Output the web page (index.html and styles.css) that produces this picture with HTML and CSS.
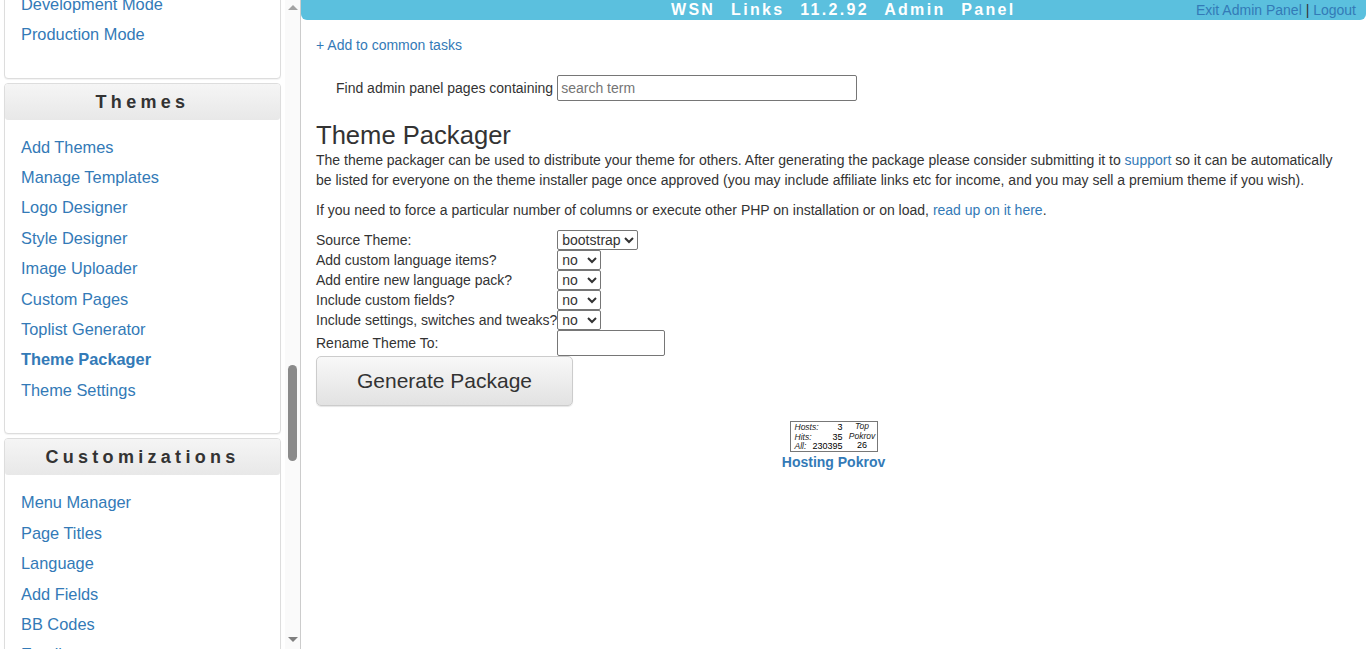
FILE: index.html
```html
<!DOCTYPE html>
<html lang="en">
<head>
  <meta charset="UTF-8" />
  <title>Theme Packager</title>
  <link rel="stylesheet" href="styles.css">
</head>
<body>
  <aside class="sidebar">
    <div class="panels">
      <div class="panel panel-first">
        <ul class="menu">
          <li><a href="#">Development Mode</a></li>
          <li><a href="#">Production Mode</a></li>
        </ul>
      </div>
      <div class="panel">
        <div class="panel-heading">Themes</div>
        <ul class="menu">
          <li><a href="#">Add Themes</a></li>
          <li><a href="#">Manage Templates</a></li>
          <li><a href="#">Logo Designer</a></li>
          <li><a href="#">Style Designer</a></li>
          <li><a href="#">Image Uploader</a></li>
          <li><a href="#">Custom Pages</a></li>
          <li><a href="#">Toplist Generator</a></li>
          <li><a href="#" class="current">Theme Packager</a></li>
          <li><a href="#">Theme Settings</a></li>
        </ul>
      </div>
      <div class="panel">
        <div class="panel-heading">Customizations</div>
        <ul class="menu">
          <li><a href="#">Menu Manager</a></li>
          <li><a href="#">Page Titles</a></li>
          <li><a href="#">Language</a></li>
          <li><a href="#">Add Fields</a></li>
          <li><a href="#">BB Codes</a></li>
          <li><a href="#">Emails</a></li>
        </ul>
      </div>
    </div>
    <div class="scrollbar">
      <span class="arrow arrow-up"></span>
      <span class="thumb"></span>
      <span class="arrow arrow-down"></span>
    </div>
  </aside>

  <main class="content">
    <header class="topbar">
      <div class="topbar-title">WSN&nbsp; Links&nbsp; 11.2.92&nbsp; Admin&nbsp; Panel</div>
      <div class="topbar-links"><a href="#">Exit Admin Panel</a> | <a href="#">Logout</a></div>
    </header>

    <div class="page">
      <a href="#" class="add-task">+ Add to common tasks</a>

      <form class="search">
        <label for="term">Find admin panel pages containing</label>
        <input type="text" id="term" class="search-input" placeholder="search term">
      </form>

      <h1>Theme Packager</h1>
      <p>The theme packager can be used to distribute your theme for others. After generating the package please consider submitting it to <a href="#">support</a> so it can be automatically be listed for everyone on the theme installer page once approved (you may include affiliate links etc for income, and you may sell a premium theme if you wish).</p>
      <p>If you need to force a particular number of columns or execute other PHP on installation or on load, <a href="#">read up on it here</a>.</p>

      <form class="packager">
        <label>Source Theme:</label>
        <div><select><option>bootstrap</option></select></div>
        <label>Add custom language items?</label>
        <div><select class="yesno"><option>no</option><option>yes</option></select></div>
        <label>Add entire new language pack?</label>
        <div><select class="yesno"><option>no</option><option>yes</option></select></div>
        <label>Include custom fields?</label>
        <div><select class="yesno"><option>no</option><option>yes</option></select></div>
        <label>Include settings, switches and tweaks?</label>
        <div><select class="yesno"><option>no</option><option>yes</option></select></div>
        <label>Rename Theme To:</label>
        <div><input type="text" class="rename"></div>
      </form>
      <button type="button" class="generate">Generate Package</button>

      <div class="hosting">
        <div class="counter">
          <div class="counter-stats">
            <i>Hosts:</i><span>3</span>
            <i>Hits:</i><span>35</span>
            <i>All:</i><span>230395</span>
          </div>
          <div class="counter-top">
            <i>Top</i>
            <i>Pokrov</i>
            <span>26</span>
          </div>
        </div>
        <a href="#" class="hosting-link">Hosting Pokrov</a>
      </div>
    </div>
  </main>
</body>
</html>
```

FILE: styles.css
```css
* {
  box-sizing: border-box;
}

html, body {
  height: 100%;
}

body {
  margin: 0;
  font-family: "Liberation Sans", Arial, sans-serif;
  font-size: 14px;
  line-height: 20px;
  color: #333;
  background: #fff;
  display: flex;
  overflow: hidden;
}

a {
  color: #337ab7;
  text-decoration: none;
}

/* left column */
.sidebar {
  flex: 0 0 301px;
  height: 100vh;
  display: flex;
  overflow: hidden;
  border-right: 1px solid #ccc;
}

.panels {
  width: 281px;
  padding-left: 4px;
  flex: none;
}

.panel {
  background: #fff;
  border: 1px solid #ddd;
  border-radius: 4px;
  margin-bottom: 4px;
  box-shadow: 0 1px 1px rgba(0, 0, 0, 0.05);
}

.panel-first {
  margin-top: -24.5px;
}

.panel-heading {
  height: 36px;
  line-height: 36px;
  text-align: center;
  font-size: 18px;
  font-weight: 700;
  letter-spacing: 4.3px;
  color: #333;
  background: linear-gradient(to bottom, #f5f5f5, #e8e8e8);
  border-radius: 3px;
}

.menu {
  list-style: none;
  margin: 0;
  padding: 16px 16px 24.3px;
  font-size: 16.38px;
  line-height: 22px;
}

.menu li {
  margin-bottom: 8.4px;
}

.menu .current {
  font-weight: 700;
}

.scrollbar {
  flex: none;
  width: 15px;
  margin-left: 4px;
  display: flex;
  flex-direction: column;
  align-items: center;
  padding: 5px 0;
  background: #fafafa;
}

.arrow {
  width: 0;
  height: 0;
  border-left: 5px solid transparent;
  border-right: 5px solid transparent;
}

.arrow-up {
  border-bottom: 5px solid #a3a3a3;
}

.arrow-down {
  border-top: 5px solid #7f7f7f;
}

.thumb {
  width: 9px;
  height: 96px;
  margin: 355px 0 176px;
  border-radius: 5px;
  background: #8a8a8a;
}

/* main column */
.content {
  flex: 1;
  min-width: 0;
}

.topbar {
  height: 20px;
  display: flex;
  justify-content: space-between;
  padding-right: 10px;
  background: #5bc0de;
  border-radius: 0 0 6px 6px;
}

.topbar-title {
  margin-left: 370px;
  font-size: 16px;
  font-weight: 700;
  letter-spacing: 2.3px;
  word-spacing: 1.2px;
  color: #fff;
  white-space: nowrap;
}

.page {
  padding: 15px 15px 0;
}

.add-task {
  display: block;
}

.search {
  display: flex;
  align-items: center;
  gap: 4px;
  margin: 20px 0 0 20px;
}

.search-input {
  width: 300px;
  height: 26px;
  padding: 1px 3px;
  border: 1px solid #767676;
  border-radius: 2px;
  font: 14px "Liberation Sans", Arial, sans-serif;
}

.search-input::placeholder {
  color: #757575;
}

h1 {
  margin: 19px 0 0;
  font-size: 25.6px;
  font-weight: 400;
  line-height: 30px;
  color: #333;
}

p {
  margin: 0 0 10px;
  padding-right: 15px;
}

.packager {
  display: grid;
  grid-template-columns: max-content 1fr;
  align-items: center;
}

.packager select {
  display: block;
  height: 20px;
  font: 14px "Liberation Sans", Arial, sans-serif;
  color: #333;
  background: #fff;
  border: 1px solid #767676;
  border-radius: 2px;
}

.rename {
  display: block;
  width: 108px;
  height: 26px;
  border: 1px solid #767676;
  border-radius: 2px;
}

.generate {
  display: block;
  width: 257px;
  height: 50px;
  padding: 0;
  font: 21px "Liberation Sans", Arial, sans-serif;
  color: #333;
  background: linear-gradient(to bottom, #f8f8f8, #e2e2e2);
  border: 1px solid #ccc;
  border-radius: 5px;
  box-shadow: 0 1px 1px rgba(0, 0, 0, 0.1);
}

.hosting {
  display: flex;
  flex-direction: column;
  align-items: center;
  margin-top: 15px;
}

.counter {
  width: 88px;
  height: 31px;
  display: flex;
  padding: 1px 1px 0 4px;
  border: 1px solid #777;
  font-size: 9px;
  line-height: 9.5px;
  color: #000;
  background: #fff;
}

.counter i {
  font-size: 8.5px;
  color: #222;
}

.counter-stats {
  display: grid;
  grid-template-columns: 17px 31px;
  margin-right: 6px;
}

.counter-stats span {
  text-align: right;
  white-space: nowrap;
}

.counter-top {
  width: 27px;
  display: flex;
  flex-direction: column;
  align-items: center;
  margin-top: -1px;
}

.hosting-link {
  font-weight: 700;
  line-height: 21px;
}
```
